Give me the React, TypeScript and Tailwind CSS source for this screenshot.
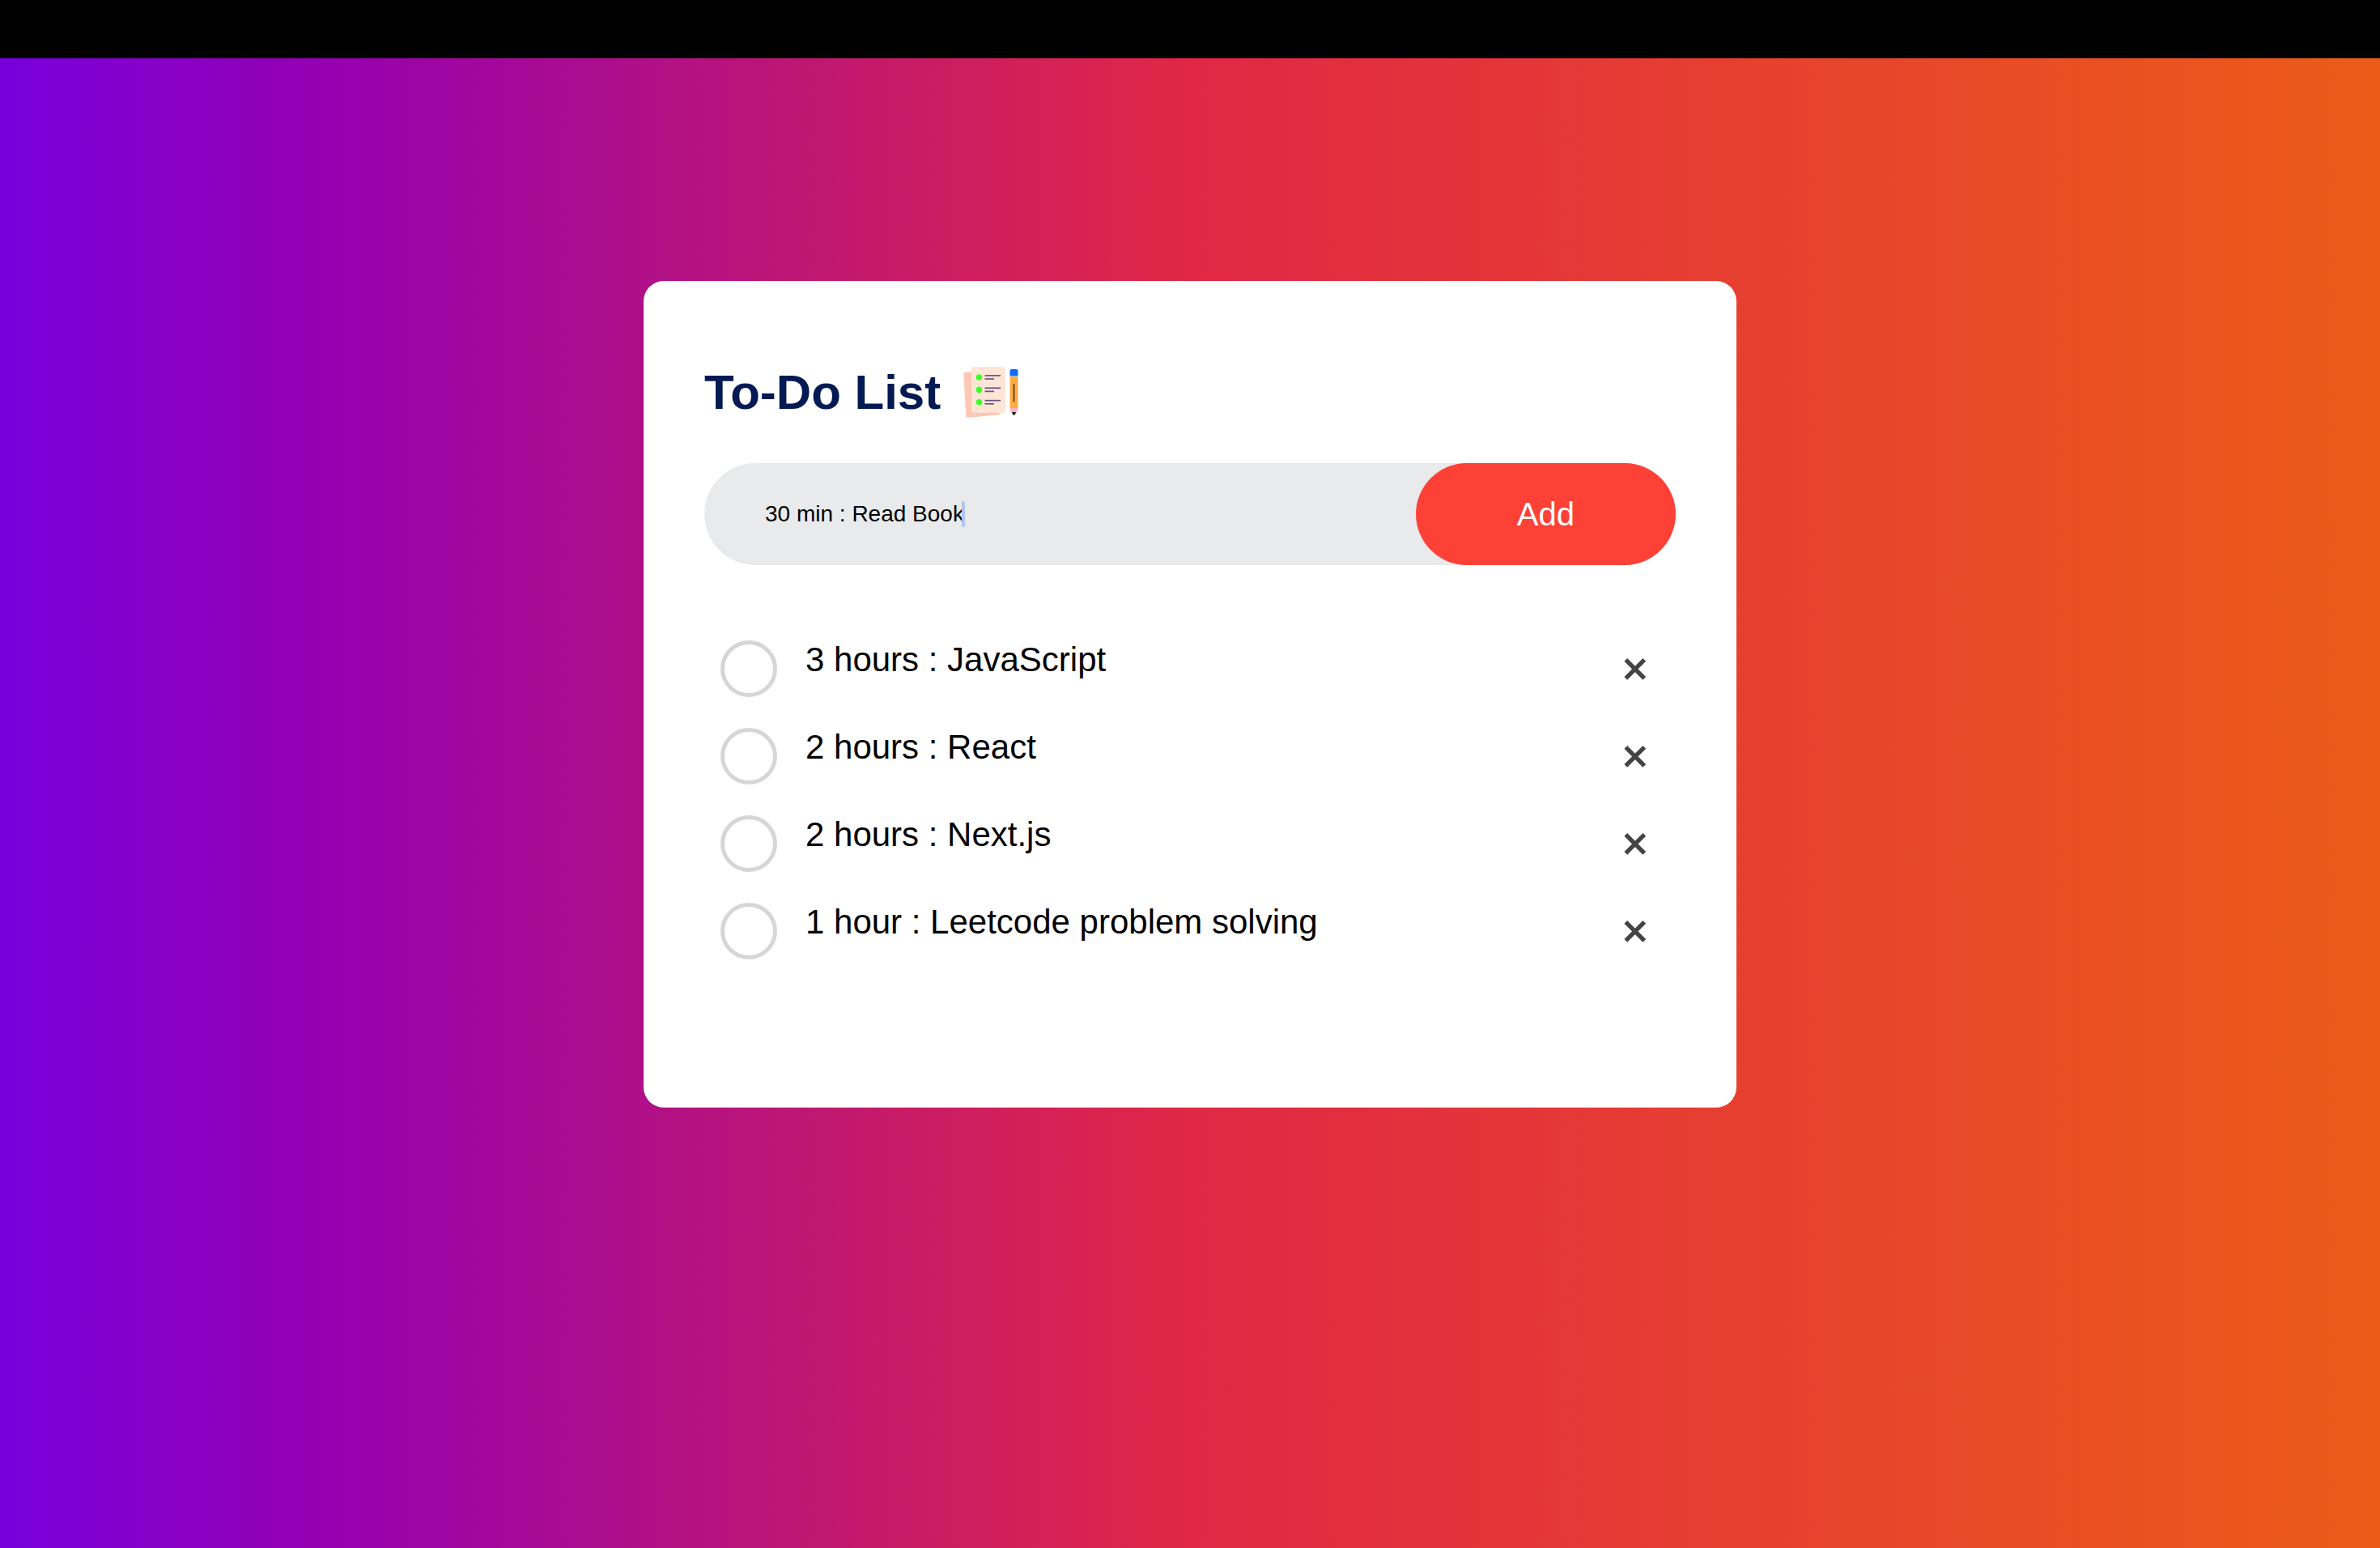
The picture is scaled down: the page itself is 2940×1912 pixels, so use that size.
import { useState } from "react";

const initialTasks = [
  "3 hours : JavaScript",
  "2 hours : React",
  "2 hours : Next.js",
  "1 hour : Leetcode problem solving",
];

function ChecklistIcon() {
  return (
    <svg viewBox="0 0 75 75" className="size-[75px]" aria-hidden="true">
      <path d="M5.500 12.700L38 11L49.500 61Q49.500 65 46.500 65.500L9 68.700Q6.500 69 6.300 66.500L3.300 15Q3.200 12.900 5.500 12.700Z" fill="#ffc7b6" />
      <rect x="13" y="6.300" width="42" height="56.400" rx="2.500" fill="#ffe5d6" />
      {[0, 1, 2].map((i) => (
        <g key={i} transform={`translate(0 ${i * 15.4})`}>
          <circle cx="22.500" cy="19" r="3.800" fill="#3dff27" />
          <path d="M29.500 16.900H49" stroke="#685184" strokeWidth="1.700" />
          <path d="M29.500 21H41" stroke="#685184" strokeWidth="1.700" />
        </g>
      ))}
      <path d="M60.500 18H70.500V57H60.500Z" fill="#ffac45" />
      <path d="M60.500 17.500V11Q60.500 9 62.500 9H68.500Q70.500 9 70.500 11V17.500Z" fill="#0d6efd" />
      <path d="M65.500 27V49.500" stroke="#5c4222" strokeWidth="1.800" />
      <path d="M60.500 57H70.500Q70.500 61 68 63H63Q60.500 61 60.500 57Z" fill="#ffb1c1" />
      <path d="M63 62H68L67 65Q65.500 66.500 64 65Z" fill="#222" />
    </svg>
  );
}

function CloseIcon() {
  return (
    <svg viewBox="0 0 28 28" className="size-7" fill="none" stroke="#444" strokeWidth="5.300" aria-hidden="true">
      <path d="M2.300 2.800L25.300 25.800M25.300 2.800L2.300 25.800" />
    </svg>
  );
}

export default function App() {
  const [tasks, setTasks] = useState(initialTasks);
  const [draft, setDraft] = useState("30 min : Read Book");

  return (
    <div className="flex min-h-screen flex-col bg-black pt-[72px] font-['Liberation_Sans',Arial,sans-serif] text-black">
      <main className="flex grow flex-col items-center bg-[linear-gradient(90deg,#7800dc_0%,#9700b0_14%,#ae0e8b_26%,#c61a69_37%,#e12745_50%,#ec5c18_100%)] px-6 pt-[275px]">
        <section className="w-full max-w-[1350px] rounded-[25px] bg-white px-[75px] pt-[100px] pb-[165px]">
          <h1 className="flex items-center gap-[25px] text-[60px] leading-[75px] font-bold text-[#031a53]">
            To-Do List
            <ChecklistIcon />
          </h1>
          <form
            className="mt-[50px] flex rounded-full bg-[#e9eaec]"
            onSubmit={(e) => {
              e.preventDefault();
              if (draft) setTasks([...tasks, draft]);
              setDraft("");
            }}
          >
            <div className="relative flex grow items-center pl-[75px]">
              <input
                aria-label="New task"
                value={draft}
                onChange={(e) => setDraft(e.target.value)}
                className="w-full bg-transparent text-[28px] leading-8 outline-none"
              />
              <span className="pointer-events-none absolute left-[318px] h-8 w-1 rounded-full bg-[#b0c5f3]" />
            </div>
            <button type="submit" className="h-[126px] rounded-full bg-[#fe4136] px-[125px] text-[40px] text-white">
              Add
            </button>
          </form>
          <ul className="mt-[73px]">
            {tasks.map((task, i) => (
              <li key={i} className="flex h-[108px] items-start pt-5 pl-5">
                <label className="flex grow items-start gap-[35px] text-[42px] leading-[48px]">
                  <input
                    type="checkbox"
                    className="size-[70px] shrink-0 appearance-none rounded-full border-5 border-[#d6d6d6]"
                  />
                  {task}
                </label>
                <button
                  type="button"
                  aria-label={`Remove ${task}`}
                  onClick={() => setTasks(tasks.filter((_, j) => j !== i))}
                  className="flex h-[70px] w-[100px] items-center justify-center"
                >
                  <CloseIcon />
                </button>
              </li>
            ))}
          </ul>
        </section>
      </main>
    </div>
  );
}
